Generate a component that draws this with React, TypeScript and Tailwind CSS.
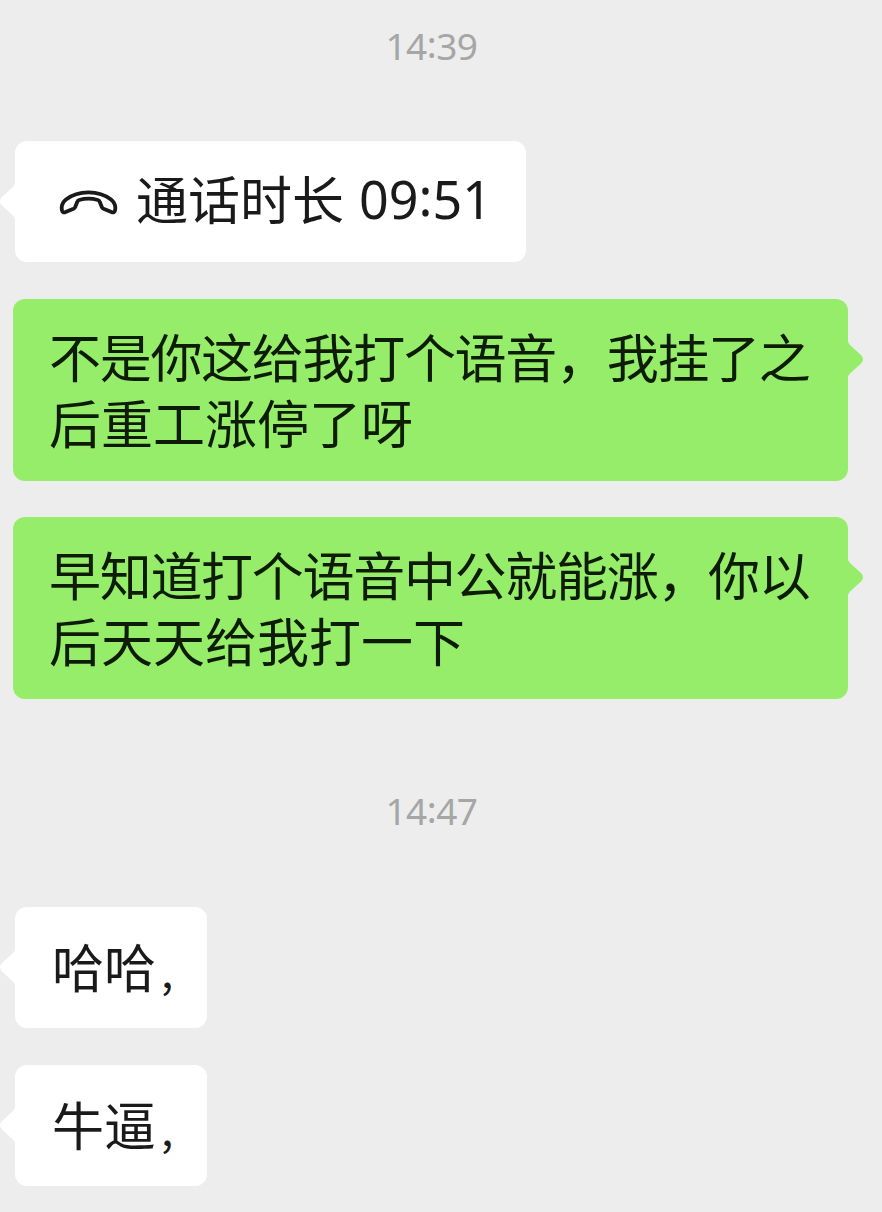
import clsx from 'clsx'
import type { ReactNode } from 'react'

interface BubbleProps {
  mine?: boolean
  className?: string
  children: ReactNode
}

function Tail({ mine }: { mine?: boolean }) {
  return (
    <svg
      viewBox="0 0 16 38"
      className={clsx(
        'absolute top-[42px] w-4 h-[38px]',
        mine ? '-right-[15px] text-[#95ed6a]' : '-left-[15px] -scale-x-100 text-white'
      )}
      fill="currentColor"
    >
      <path d="M0 0L1 0Q1 2 3 4L14.5 14.5Q17.5 18.5 14.5 22L3 32.5Q1 34.5 1 37L0 37Z" />
    </svg>
  )
}

function Bubble({ mine, className, children }: BubbleProps) {
  return (
    <div
      className={clsx(
        'relative rounded-[12px] text-[52px] leading-[66px] whitespace-nowrap',
        mine
          ? 'ml-[13px] w-[835px] h-[182px] bg-[#95ed6a] text-[#0e1c06] pl-9 pt-6'
          : 'ml-[15px] h-[121px] bg-white text-[#1a1a1a] flex items-center',
        className
      )}
    >
      <Tail mine={mine} />
      {children}
    </div>
  )
}

// digits with the colon lifted to the middle of their height
function Clock({ value }: { value: string }) {
  const [left, right] = value.split(':')
  return (
    <>
      {left}
      <span className="inline-block -translate-y-[0.06em]">:</span>
      {right}
    </>
  )
}

function Time({ value }: { value: string }) {
  return (
    <p className="w-[863px] text-center font-['Noto_Sans',sans-serif] text-[37px] leading-[38px] pb-0.5 tracking-[-0.5px] text-[#a6a6a6]">
      <Clock value={value} />
    </p>
  )
}

function Comma() {
  return <span className="ml-[5px] text-[44px]">,</span>
}

function PhoneIcon() {
  return (
    <svg viewBox="0 0 60 28" className="w-[60px] h-7 ml-[43px]" fill="none" stroke="currentColor" strokeWidth="3.8" strokeLinejoin="round">
      <path d="M7 24.3L15.5 20.8Q16.8 20.2 17.3 18.8L19.3 13.8Q19.8 12.4 21.2 12Q30.5 9.2 39.8 12Q41.2 12.4 41.7 13.8L43.7 18.8Q44.2 20.2 45.5 20.8L54 24.3Q56.5 25 57 22.5Q58.5 16 53 11.5Q44 4.3 30.5 4.3Q17 4.3 8 11.5Q2.5 16 4 22.5Q4.5 25 7 24.3Z" />
    </svg>
  )
}

export default function App() {
  return (
    <div className="w-[882px] h-[1212px] overflow-hidden bg-[#ededed] pt-[27px] font-['Noto_Sans_CJK_SC',sans-serif]">
      <Time value="14:39" />
      <Bubble className="mt-[74px] w-[511px]">
        <PhoneIcon />
        <span className="ml-[18px] pb-[7px]">通话时长</span>
        <span className="ml-[15px] pb-[5px] font-['Noto_Sans',sans-serif] text-[52px]">
          <Clock value="09:51" />
        </span>
      </Bubble>
      <Bubble mine className="mt-[37px]">
        <p className="tracking-[-1.3px]">不是你这给我打个语音，我挂了之</p>
        <p>后重工涨停了呀</p>
      </Bubble>
      <Bubble mine className="mt-9">
        <p className="tracking-[-1.3px]">早知道打个语音中公就能涨，你以</p>
        <p>后天天给我打一下</p>
      </Bubble>
      <div className="mt-[93px]">
        <Time value="14:47" />
      </div>
      <Bubble className="mt-[75px] w-48 pl-[37px]">
        <p>
          哈哈
          <Comma />
        </p>
      </Bubble>
      <Bubble className="mt-[37px] w-48 pl-[37px]">
        <p>
          牛逼
          <Comma />
        </p>
      </Bubble>
    </div>
  )
}
